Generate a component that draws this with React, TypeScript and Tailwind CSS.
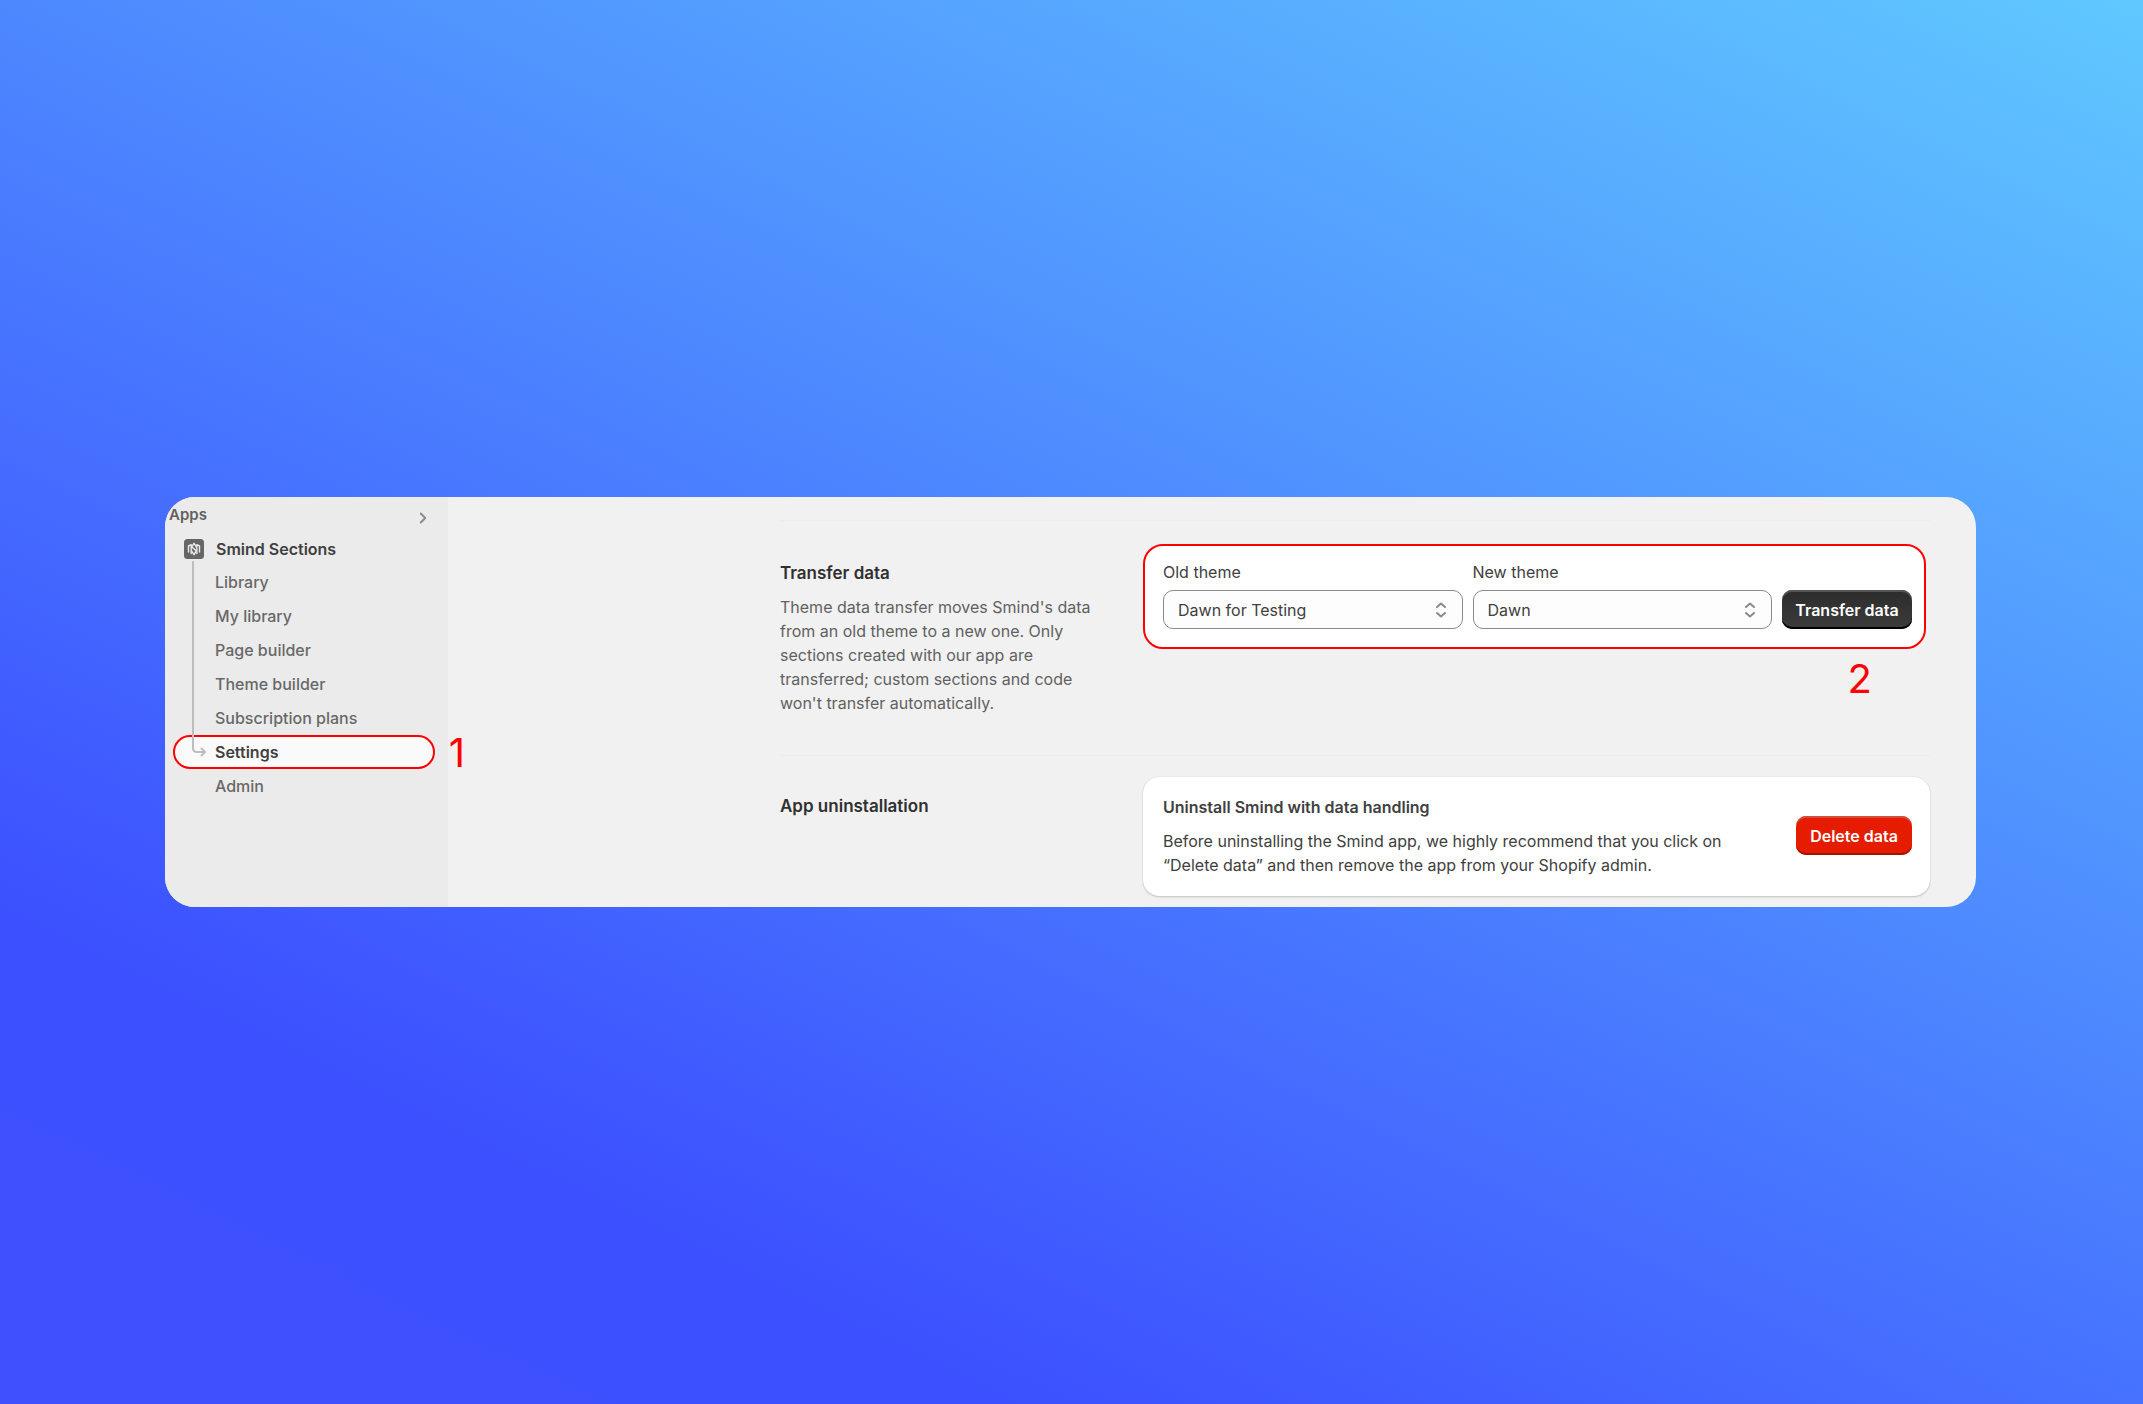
import { ChevronRight } from "lucide-react";

const links = ["Library", "My library", "Page builder", "Theme builder", "Subscription plans", "Settings", "Admin"];

function AppIcon() {
  return (
    <svg viewBox="0 0 20 20" className="size-5 shrink-0" aria-hidden="true">
      <rect width="20" height="20" rx="3.500" fill="#666666" />
      <g fill="none" stroke="#ebebeb" strokeWidth="1.400" strokeLinejoin="round" strokeLinecap="round">
        <path d="M4.500 13V7L7.200 5.700V14.500M15.500 13V7L12.800 5.700V14.500" />
        <path d="M12.300 7.800L10 4.300L7.700 7.800L12.300 12L10 15.700L7.700 12" />
      </g>
    </svg>
  );
}

function Sidebar() {
  return (
    <aside className="w-[283px] shrink-0 bg-[#ebebeb]">
      <div className="flex h-[37px] items-center justify-between pl-1 pr-4 text-[15px] font-semibold text-[#616161]">
        <h2>Apps</h2>
        <button type="button" aria-label="Show all apps" className="pt-1">
          <ChevronRight className="size-[18px] text-[#8a8a8a]" strokeWidth={2.5} />
        </button>
      </div>
      <nav aria-label="Apps" className="relative pl-2 pr-[13px]">
        <a href="#sections" className="flex h-[29px] items-center gap-3 pl-[11px] text-base font-semibold text-[#404040]">
          <AppIcon />
          Smind Sections
        </a>
        <ul className="pt-[2px]">
          {links.map((label) =>
            label === "Settings" ? (
              <li key={label} className="relative">
                <a href="#settings" aria-current="page" className="flex h-[34px] items-center rounded-full border-2 border-[#ff0000] bg-[#fafafa] pl-10 text-base font-semibold text-[#404040]">
                  {label}
                </a>
                <span className="absolute -right-[30px] top-0 text-[40px] leading-9 text-[#ff0000]">1</span>
              </li>
            ) : (
              <li key={label}>
                <a href="#page" className="flex h-[34px] items-center pl-[42px] text-base font-[450] text-[#686868]">
                  {label}
                </a>
              </li>
            ),
          )}
        </ul>
        <svg viewBox="0 0 16 196" className="absolute left-[27px] top-[27px] h-[196px] w-4" fill="none" stroke="#bdbdbd" strokeWidth="2" strokeLinecap="round" strokeLinejoin="round" aria-hidden="true">
          <path d="M1 1V187Q1 191 5 191H13M9.500 187.500L13 191L9.500 194.500" />
        </svg>
      </nav>
    </aside>
  );
}

function ThemeSelect({ id, label, value }: { id: string; label: string; value: string }) {
  return (
    <div className="flex min-w-0 flex-1 flex-col gap-[6px]">
      <label htmlFor={id} className="text-base leading-6 text-[#404040]">
        {label}
      </label>
      <div className="relative">
        <select id={id} className="block h-[39px] w-full appearance-none rounded-[10px] border border-[#8a8a8a] bg-[#fdfdfd] px-[14px] text-base text-[#404040]">
          <option>{value}</option>
        </select>
        <svg viewBox="0 0 12 16" className="pointer-events-none absolute right-4 top-3 h-4 w-3" fill="none" stroke="#8a8a8a" strokeWidth="2" strokeLinecap="round" strokeLinejoin="round" aria-hidden="true">
          <path d="M2 5L6 1.500L10 5M2 11L6 14.500L10 11" />
        </svg>
      </div>
    </div>
  );
}

export default function App() {
  return (
    <div className="flex min-h-screen items-center bg-[linear-gradient(206deg,#60c8ff_0%,#3c50ff_80%,#4050ff_100%)] pl-[165px] pr-[167px] font-['Inter',sans-serif]">
      <div className="flex h-[410px] w-full overflow-hidden rounded-[30px] bg-[#f1f1f1]">
        <Sidebar />
        <main className="ml-auto mr-[46px] flex w-[1150px] flex-col pt-[23px]">
          <hr className="border-[#ececec]" />
          <section className="flex pt-[23px]">
            <div className="w-[363px] shrink-0 pt-[17px]">
              <h2 className="text-[17px] leading-6 font-semibold text-[#303030]">Transfer data</h2>
              <p className="w-[320px] pt-[10px] text-base leading-6 text-[#616161]">
                Theme data transfer moves Smind's data from an old theme to a new one. Only sections created with our app are transferred; custom sections and code won't transfer automatically.
              </p>
            </div>
            <div className="relative h-[105px] min-w-0 flex-1">
              <form className="mr-1 flex h-full items-end gap-[10px] rounded-[20px] border-2 border-[#ff0000] bg-white pl-[18px] pr-3 pb-[18px]">
                <ThemeSelect id="old-theme" label="Old theme" value="Dawn for Testing" />
                <ThemeSelect id="new-theme" label="New theme" value="Dawn" />
                <button type="button" className="h-[39px] w-[130px] shrink-0 rounded-[10px] bg-linear-to-b from-[#2c2c2c] to-[#3c3c3c] text-base font-semibold text-white shadow-[inset_0_-2px_0_#000,inset_0_2px_0_#555]">
                  Transfer data
                </button>
              </form>
              <span className="absolute right-[58px] top-[115px] text-[40px] leading-10 text-[#ff0000]">2</span>
            </div>
          </section>
          <hr className="mt-10 border-[#ececec]" />
          <section className="flex pt-[21px]">
            <h2 className="w-[363px] shrink-0 pt-[17px] text-[17px] leading-6 font-semibold text-[#303030]">App uninstallation</h2>
            <div className="flex h-[119px] min-w-0 flex-1 items-center justify-between rounded-2xl bg-white pb-[2px] pl-5 pr-[18px] shadow-[0_1px_2px_#00000030,0_0_1px_#00000030]">
              <div>
                <h3 className="text-base leading-6 font-semibold text-[#404040]">Uninstall Smind with data handling</h3>
                <p className="w-[580px] pt-[10px] text-base leading-6 text-[#404040]">
                  Before uninstalling the Smind app, we highly recommend that you click on “Delete data” and then remove the app from your Shopify admin.
                </p>
              </div>
              <button type="button" className="h-[39px] w-[116px] rounded-[10px] bg-[#e51c00] text-base font-semibold text-white shadow-[inset_0_-2px_0_#a81200,inset_0_2px_0_#d84c3c]">
                Delete data
              </button>
            </div>
          </section>
        </main>
      </div>
    </div>
  );
}
